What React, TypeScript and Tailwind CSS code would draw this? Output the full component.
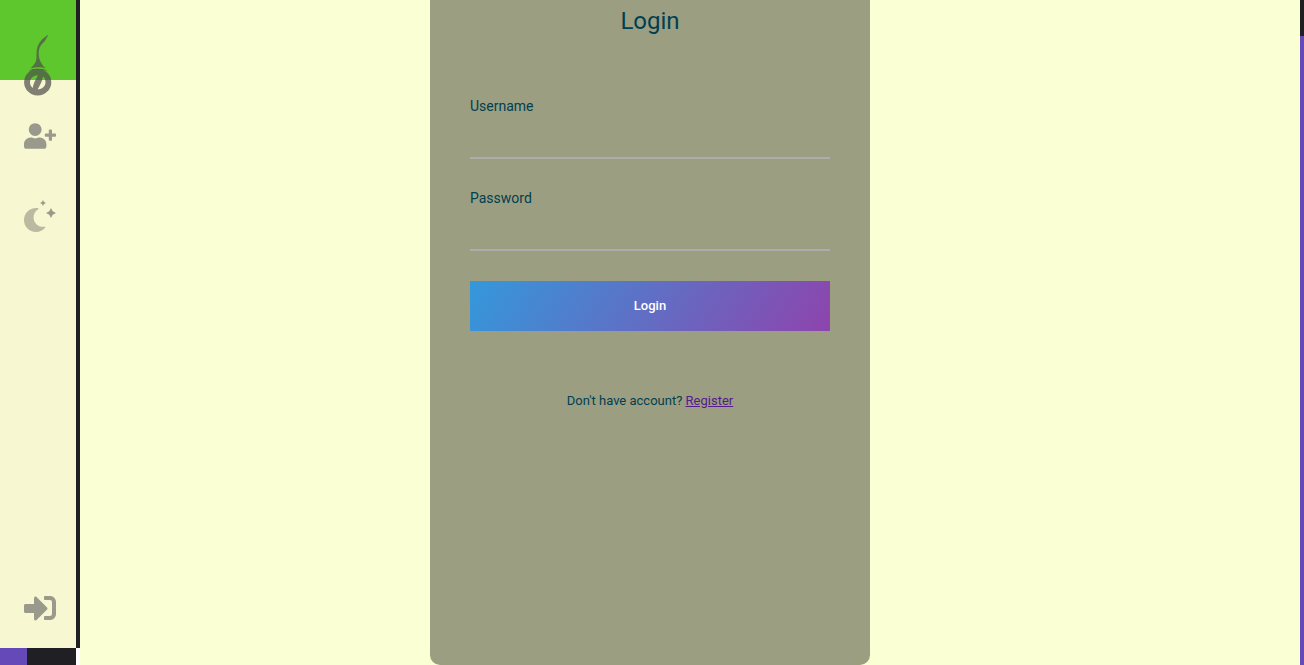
import React from "react";
import { FaSignInAlt, FaUserPlus } from "react-icons/fa";

function Logo() {
  return (
    <svg viewBox="0 0 32 64" className="h-16 w-8" aria-hidden="true">
      <g fill="#50504c" fillOpacity="0.72">
        <path d="M24.500 0.500C18.500 4 14 9 12.800 15.500c-.6 5 .2 8-.8 11.500C11 30 8.500 32 6.500 34.500c5-1.600 11-1.600 15 0C18.500 31 16 28 15.200 24C14 16 15.500 12 19.500 8.500 21.500 6.500 22.500 4 24.500 0.500z" />
        <path d="M4.500 37.500C6.500 35.500 9 34.800 14 34.800s7.500.7 9.500 2.700l-1.800-.5c-4.700-2-10.700-2-15.400 0z" />
        <path
          fillRule="evenodd"
          d="M13.700 35a13.600 13.200 0 1 0 0 26.400a13.600 13.200 0 1 0 0-26.400z M14 41.200C9.500 41.200 6 44.200 6 48.300c0 2.400 1 4.300 2.700 5.600C9.200 50 11.500 45.500 14 41.200z M13.700 55.300C18.200 55.300 21.500 52.300 21.500 48.200c0-2.400-.8-4.300-2.500-5.600C18.500 46.500 16.200 51 13.700 55.300z"
        />
      </g>
    </svg>
  );
}

function NightIcon() {
  return (
    <svg viewBox="0 0 512 512" className="size-8" fill="#999a8b" aria-hidden="true">
      <path
        opacity="0.65"
        d="M332.2 426.4c8.1-1.6 13.9 8 8.6 14.5a191.180 191.180 0 0 1-149 71.100C85.800 512 0 426 0 320c0-120 108.700-210.600 227-188.800 8.200 1.600 10.100 12.600 2.800 16.700a150.300 150.300 0 0 0-76.100 130.800c0 94 85.400 165.400 178.500 147.700z"
      />
      <path d="M320 32L304 0l-16 32-32 16 32 16 16 32 16-32 32-16zm138.700 149.300L432 128l-26.700 53.300L352 208l53.300 26.700L432 288l26.700-53.300L512 208z" />
    </svg>
  );
}

function Sidebar() {
  return (
    <aside className="flex w-20 shrink-0 flex-col bg-white">
      <div className="flex min-h-0 flex-1">
        <nav className="flex flex-1 flex-col bg-[#f7f7d2] text-[#999a8b]">
          <a href="#home" aria-label="Home" className="flex h-20 shrink-0 bg-[#5fc72e] pt-[34px] pl-6">
            <Logo />
          </a>
          <a href="#register" aria-label="Register" className="mt-4 flex h-20 items-center pl-6">
            <FaUserPlus className="size-8" />
          </a>
          <button type="button" aria-label="Toggle theme" className="flex h-20 items-center pl-6">
            <NightIcon />
          </button>
          <a href="#login" aria-label="Login" className="mt-auto flex h-20 items-center pl-6">
            <FaSignInAlt className="size-8" />
          </a>
        </nav>
        <div className="w-1 bg-[#202024]" />
      </div>
      <div className="mr-1 flex h-[17px] bg-[#202024]">
        <div className="w-[27px] bg-[#6649b8]" />
      </div>
    </aside>
  );
}

function Field({ id, label, type }: { id: string; label: string; type: string }) {
  return (
    <div className="mb-[30px] flex flex-col">
      <label htmlFor={id} className="text-sm leading-[18px]">
        {label}
      </label>
      <input
        id={id}
        type={type}
        className="h-11 w-full border-b-2 border-[#adadad] bg-transparent text-base outline-none"
      />
    </div>
  );
}

export default function App() {
  return (
    <div className="flex h-screen overflow-hidden bg-[#fbffd4] font-['Roboto',sans-serif] text-[#004050]">
      <Sidebar />
      <main className="flex flex-1 justify-center">
        <form
          className="mr-20 w-full max-w-[440px] rounded-b-[10px] bg-[#9c9e82] px-10 pt-[5px]"
          onSubmit={(e) => e.preventDefault()}
        >
          <h1 className="mb-[60px] text-center text-2xl leading-8">Login</h1>
          <Field id="username" label="Username" type="text" />
          <Field id="password" label="Password" type="password" />
          <button
            type="submit"
            className="h-[50px] w-full bg-[linear-gradient(120deg,#3498db,#8e44ad)] text-[13px] font-medium text-white"
          >
            Login
          </button>
          <p className="mt-[60px] text-center text-[13px] leading-5">
            Don't have account?{" "}
            <a href="#register" className="text-[#551a8b] underline">
              Register
            </a>
          </p>
        </form>
      </main>
      <div className="flex w-1 shrink-0 flex-col bg-[#202024]">
        <div className="mt-9 flex-1 bg-[#6649b8]" />
      </div>
    </div>
  );
}
